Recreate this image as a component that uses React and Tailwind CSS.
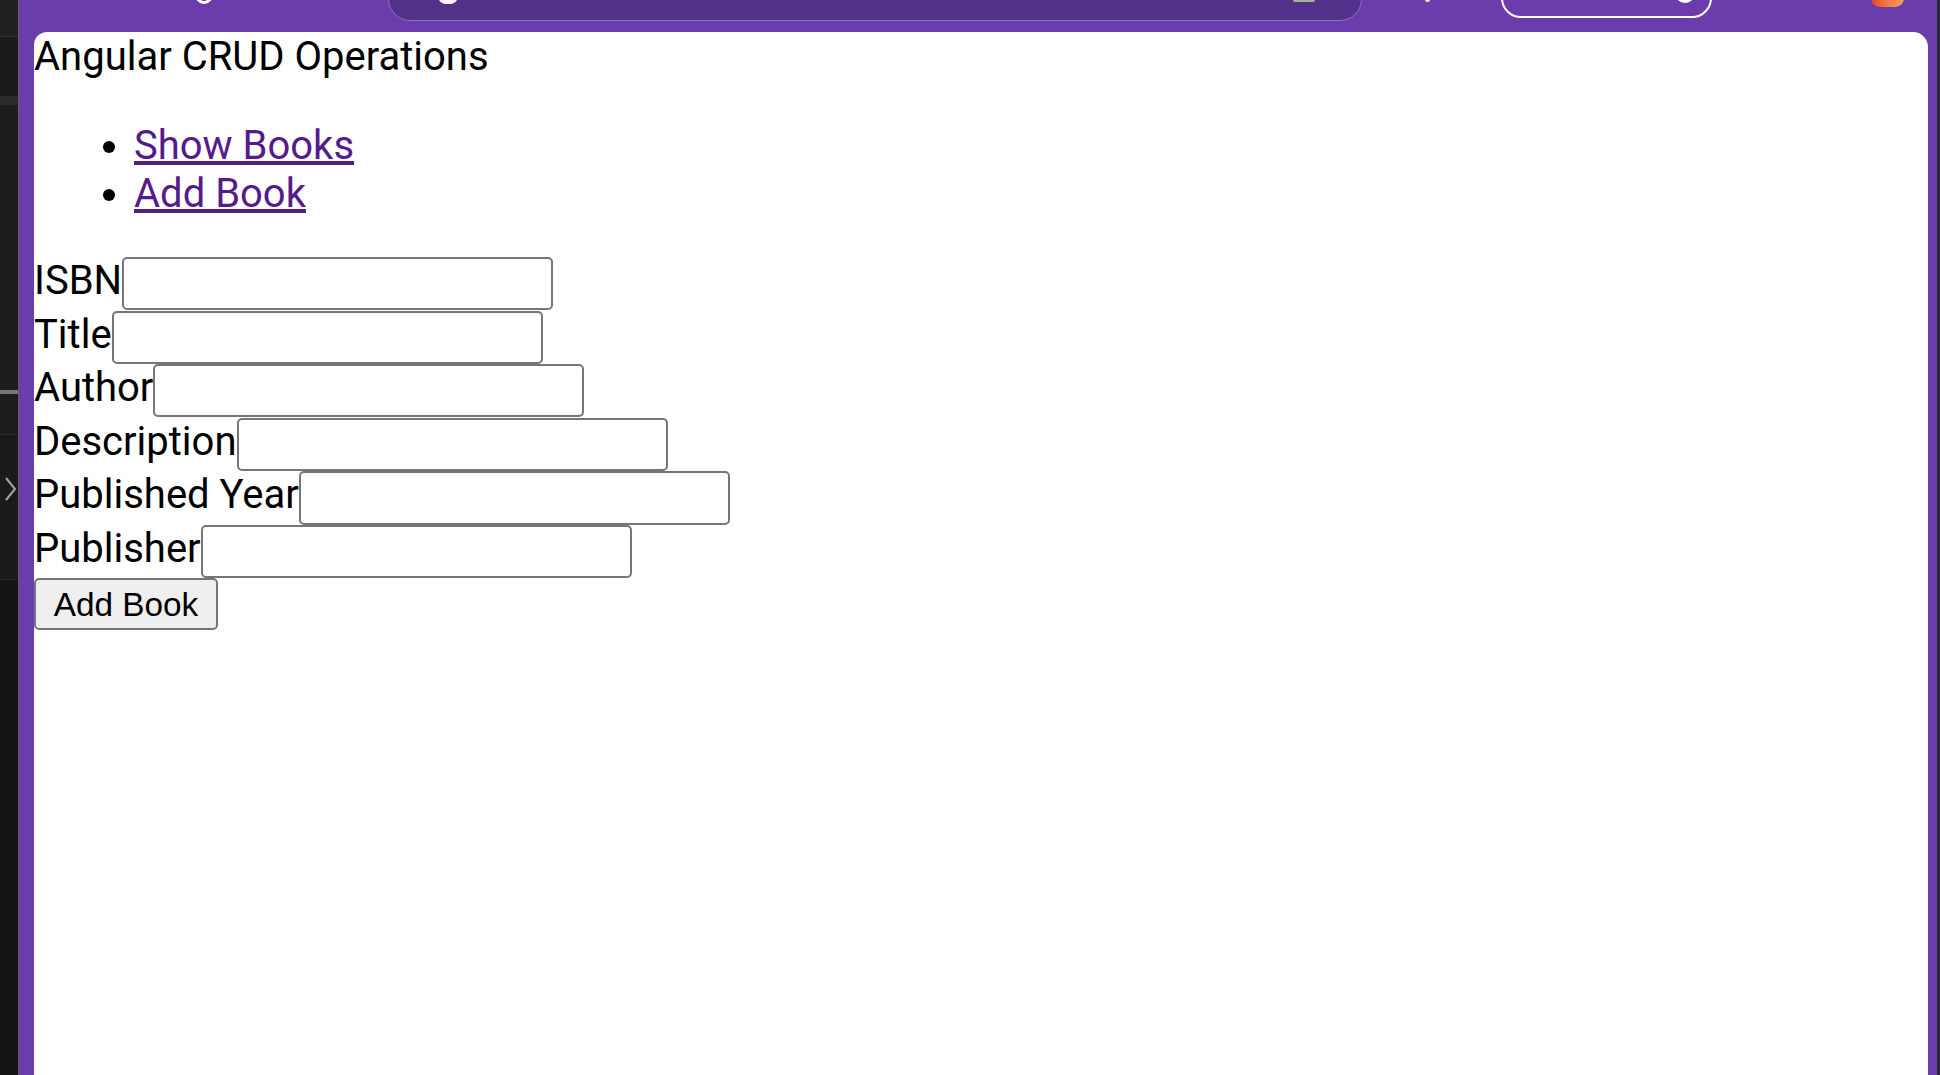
import React from 'react';

const fields = ['ISBN', 'Title', 'Author', 'Description', 'Published Year', 'Publisher'];

const TopBar = () => (
  <div className="h-[32px] shrink-0 flex items-start overflow-hidden">
    {/* cut-off browser toolbar icons */}
    <div className="ml-[176px] -mt-[14px] w-[18px] h-[18px] rounded-full border-[3px] border-white"></div>
    <div className="ml-[175px] -mt-[39px] w-[974px] h-[60px] rounded-[22px] bg-[#52318a] border border-[#8b74bb] flex items-start">
      <div className="ml-[49px] mt-[26px] w-[20px] h-[16px] rounded-full bg-white"></div>
      <div className="ml-[835px] mt-[36px] w-[22px] h-[4px] rounded-full bg-[#a9b59a]"></div>
    </div>
    <div className="ml-[63px] -mt-[4px] w-[5px] h-[6px] rounded-full bg-white"></div>
    <div className="ml-[71px] -mt-[32px] w-[211px] h-[50px] rounded-[20px] border-2 border-white flex items-start justify-end pr-[16px]">
      <div className="mt-[16px] w-[18px] h-[17px] rounded-full bg-white"></div>
    </div>
    <div className="ml-[159px] -mt-[13px] w-[33px] h-[20px] rounded-[9px] bg-gradient-to-r from-[#e2452a] via-[#f07a45] to-[#f5a25e]"></div>
  </div>
);

const SideStrip = () => (
  <div className="w-[18px] shrink-0 flex flex-col bg-[#151515]">
    <div className="h-[36px] bg-[#212121]"></div>
    <div className="h-[1px] bg-[#2e2e2e]"></div>
    <div className="h-[59px] bg-[#1b1b1b]"></div>
    <div className="h-[9px] bg-[#2a2a2a]"></div>
    <div className="h-[285px] bg-[#1d1d1d]"></div>
    <div className="h-[4px] bg-[#767676]"></div>
    <div className="h-[40px] bg-[#1c1c1c]"></div>
    <div className="h-[1px] bg-[#2c2c2c]"></div>
    <div className="h-[144px] bg-[#1a1a1a] flex items-start">
      <svg className="ml-[4px] mt-[41px]" width="13" height="26" viewBox="0 0 13 26" fill="none">
        <path d="M2 2 L11 13 L2 24" stroke="#a3a3a3" strokeWidth="2" />
      </svg>
    </div>
    <div className="h-[1px] bg-[#2a2a2a]"></div>
    <div className="flex-1 bg-[#141414]"></div>
  </div>
);

const App = () => {
  return (
    <div className="flex h-screen w-full overflow-hidden bg-[#6b3cab] font-[Roboto,sans-serif]">
      <SideStrip />
      <div className="w-[1px] shrink-0 bg-[#6e5a5e]"></div>
      <div className="flex-1 flex flex-col min-w-0">
        <TopBar />
        <div className="flex-1 flex min-h-0">
          <div className="ml-[15px] flex-1 bg-white rounded-tl-[13px] rounded-tr-[15px] text-black text-[40px] leading-[46.9px] pt-[2px]">
            <div>Angular CRUD Operations</div>

            <ul className="list-disc mt-[41px] mb-[39px] pl-[100px] leading-[48px]">
              <li><a href="#" className="text-[#551a8b] underline">Show Books</a></li>
              <li><a href="#" className="text-[#551a8b] underline">Add Book</a></li>
            </ul>

            <form>
              {fields.map((f) => (
                <div key={f} className="flex items-start h-[53.6px]">
                  <label className="mt-[1px] whitespace-nowrap">{f}</label>
                  <input
                    type="text"
                    className="w-[431px] h-[53.3px] shrink-0 bg-white border-2 border-[#767676] rounded-[5px] px-[5px] text-[33.33px] font-[Liberation_Sans,Arial,sans-serif]"
                  />
                </div>
              ))}
              <button
                type="button"
                className="w-[184px] h-[52px] flex items-center justify-center pt-[1px] bg-[#efefef] border-2 border-[#767676] rounded-[5px] text-[33.33px] leading-normal font-[Liberation_Sans,Arial,sans-serif]"
              >
                Add Book
              </button>
            </form>
          </div>
          <div className="w-[9px] shrink-0"></div>
        </div>
      </div>
      <div className="w-[3px] shrink-0 bg-[#2a2a2a]"></div>
    </div>
  );
};

export default App;
